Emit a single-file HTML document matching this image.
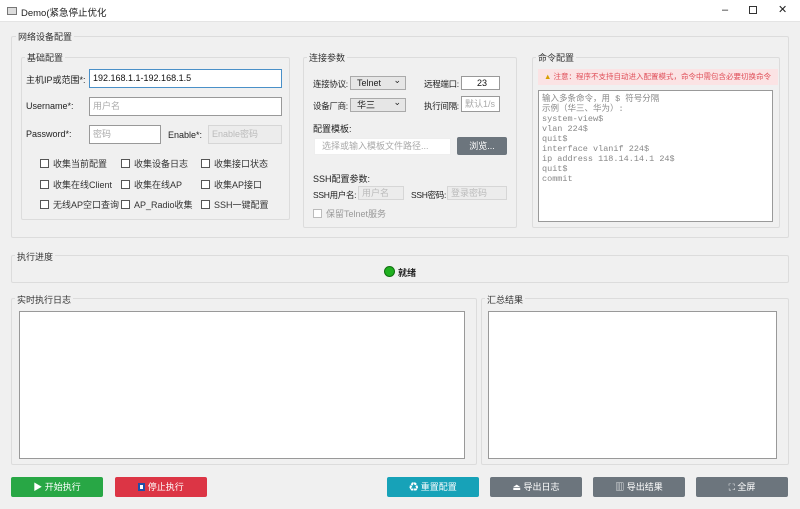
<!DOCTYPE html>
<html><head><meta charset="utf-8"><style>
*{box-sizing:border-box;margin:0;padding:0}
body{width:800px;height:509px;overflow:hidden;background:#f0f0f0;font-family:"Liberation Sans","Noto Sans CJK SC",sans-serif;font-size:9px;color:#222;position:relative}
.a{position:absolute;white-space:nowrap}
.title{left:0;top:0;width:800px;height:22px;background:#fff;border-bottom:1px solid #e4e4e4}
.grp{position:absolute;border:1px solid #dcdcdc;border-radius:2px}
.gl{position:absolute;font-size:9px;background:#f0f0f0;padding:0 2px;color:#333}
.inp{position:absolute;background:#fff;border:1px solid #999;font-size:9px;color:#aaa;padding-left:3px;line-height:16px;white-space:nowrap;overflow:hidden}
.dis{background:#ececec;border-color:#d6d6d6;color:#bbb}
.cb{position:absolute;font-size:9px;color:#333;white-space:nowrap}
.cb i{display:inline-block;width:9px;height:9px;border:1px solid #555;background:#fff;vertical-align:-1px;margin-right:4px}
.sel{position:absolute;background:#e6e6e6;border:1px solid #aaa;font-size:9px;padding-left:6px;line-height:12px}
.sel:after{content:"⌄";position:absolute;right:4px;top:-3px;font-size:9px}
.btn{position:absolute;top:477px;height:20px;width:92px;border-radius:2px;color:#fff;font-size:9px;text-align:center;line-height:20px}
.ta{position:absolute;background:#fff;border:1px solid #999}
.sm{font-size:8.5px;letter-spacing:-0.3px}
</style></head><body>
<div class="a title">
<div class="a" style="left:7px;top:7px;width:10px;height:8px;border:1px solid #777;background:#ddd"></div>
<div class="a" style="left:21px;top:5px;font-size:9.5px">Demo(紧急停止优化</div>
<div class="a" style="left:722px;top:4px;font-size:11px">–</div>
<div class="a" style="left:749px;top:6px;width:8px;height:8px;border:1px solid #333"></div>
<div class="a" style="left:778px;top:3px;font-size:11px">✕</div>
</div>

<div class="grp" style="left:11px;top:36px;width:778px;height:202px"></div>
<div class="gl" style="left:16px;top:30px">网络设备配置</div>

<div class="grp" style="left:21px;top:57px;width:269px;height:163px"></div>
<div class="gl" style="left:25px;top:51px">基础配置</div>
<div class="a" style="left:26px;top:73px">主机IP或范围*:</div>
<div class="inp" style="left:89px;top:69px;width:193px;height:19px;border-color:#4a90c8;color:#111;line-height:17px">192.168.1.1-192.168.1.5</div>
<div class="a" style="left:26px;top:101px">Username*:</div>
<div class="inp" style="left:89px;top:97px;width:193px;height:19px">用户名</div>
<div class="a" style="left:26px;top:129px">Password*:</div>
<div class="inp" style="left:89px;top:125px;width:72px;height:19px">密码</div>
<div class="a" style="left:168px;top:130px">Enable*:</div>
<div class="inp dis" style="left:208px;top:125px;width:74px;height:19px">Enable密码</div>
<div class="cb" style="left:40px;top:157px"><i></i>收集当前配置</div>
<div class="cb" style="left:121px;top:157px"><i></i>收集设备日志</div>
<div class="cb" style="left:201px;top:157px"><i></i>收集接口状态</div>
<div class="cb" style="left:40px;top:178px"><i></i>收集在线Client</div>
<div class="cb" style="left:121px;top:178px"><i></i>收集在线AP</div>
<div class="cb" style="left:201px;top:178px"><i></i>收集AP接口</div>
<div class="cb" style="left:40px;top:198px"><i></i>无线AP空口查询</div>
<div class="cb" style="left:121px;top:198px"><i></i>AP_Radio收集</div>
<div class="cb" style="left:201px;top:198px"><i></i>SSH一键配置</div>

<div class="grp" style="left:303px;top:57px;width:214px;height:171px"></div>
<div class="gl" style="left:307px;top:51px">连接参数</div>
<div class="a sm" style="left:313px;top:78px">连接协议:</div>
<div class="sel" style="left:350px;top:76px;width:56px;height:14px">Telnet</div>
<div class="a sm" style="left:424px;top:78px">远程端口:</div>
<div class="inp" style="left:461px;top:76px;width:39px;height:14px;color:#111;text-align:center;line-height:12px">23</div>
<div class="a sm" style="left:313px;top:100px">设备厂商:</div>
<div class="sel" style="left:350px;top:98px;width:56px;height:14px">华三</div>
<div class="a sm" style="left:424px;top:100px">执行间隔:</div>
<div class="inp" style="left:461px;top:96px;width:39px;height:16px;line-height:14px">默认1/s</div>
<div class="a" style="left:313px;top:122px">配置模板:</div>
<div class="inp" style="left:314px;top:138px;width:137px;height:17px;border-color:#eee;padding-left:7px;line-height:15px">选择或输入模板文件路径...</div>
<div class="a" style="left:457px;top:137px;width:50px;height:18px;background:#6c757d;border-radius:2px;color:#fff;text-align:center;line-height:18px">浏览...</div>
<div class="a" style="left:313px;top:172px">SSH配置参数:</div>
<div class="a sm" style="left:313px;top:189px">SSH用户名:</div>
<div class="inp dis" style="left:358px;top:186px;width:46px;height:14px;line-height:12px">用户名</div>
<div class="a sm" style="left:411px;top:189px">SSH密码:</div>
<div class="inp dis" style="left:447px;top:186px;width:60px;height:14px;line-height:12px">登录密码</div>
<div class="cb" style="left:313px;top:207px;color:#999"><i style="border-color:#bbb"></i>保留Telnet服务</div>

<div class="grp" style="left:532px;top:57px;width:248px;height:171px"></div>
<div class="gl" style="left:536px;top:51px">命令配置</div>
<div class="a" style="left:538px;top:69px;width:240px;height:16px;background:#fbe3e4;color:#e0505a;font-size:7.5px;line-height:16px;padding-left:6px"><span style="color:#d8a000">▲</span> 注意：程序不支持自动进入配置模式，命令中需包含必要切换命令</div>
<div class="ta" style="left:538px;top:90px;width:235px;height:132px;padding:3px 3px;font-family:'Liberation Mono','Noto Sans CJK SC',monospace;font-size:8.5px;line-height:10px;color:#888;white-space:pre">输入多条命令，用 $ 符号分隔
示例（华三、华为）:
system-view$
vlan 224$
quit$
interface vlanif 224$
ip address 118.14.14.1 24$
quit$
commit</div>

<div class="grp" style="left:11px;top:255px;width:778px;height:28px"></div>
<div class="gl" style="left:15px;top:250px">执行进度</div>
<div class="a" style="left:384px;top:266px;width:11px;height:11px;border-radius:50%;background:#20b020;border:1px solid #117011"></div>
<div class="a" style="left:398px;top:266px;font-weight:bold">就绪</div>

<div class="grp" style="left:11px;top:298px;width:466px;height:167px"></div>
<div class="gl" style="left:15px;top:293px">实时执行日志</div>
<div class="ta" style="left:19px;top:311px;width:446px;height:148px"></div>
<div class="grp" style="left:481px;top:298px;width:308px;height:167px"></div>
<div class="gl" style="left:485px;top:293px">汇总结果</div>
<div class="ta" style="left:488px;top:311px;width:289px;height:148px"></div>

<div class="btn" style="left:11px;background:#28a745">▶ 开始执行</div>
<div class="btn" style="left:115px;background:#dc3545"><span style="display:inline-block;width:7px;height:8px;background:#fff;border:2px solid #1f4fa8;vertical-align:-1px"></span> 停止执行</div>
<div class="btn" style="left:387px;background:#17a2b8">♻ 重置配置</div>
<div class="btn" style="left:490px;background:#6c757d">⏏ 导出日志</div>
<div class="btn" style="left:593px;background:#6c757d">▥ 导出结果</div>
<div class="btn" style="left:696px;background:#6c757d">⛶ 全屏</div>
</body></html>
